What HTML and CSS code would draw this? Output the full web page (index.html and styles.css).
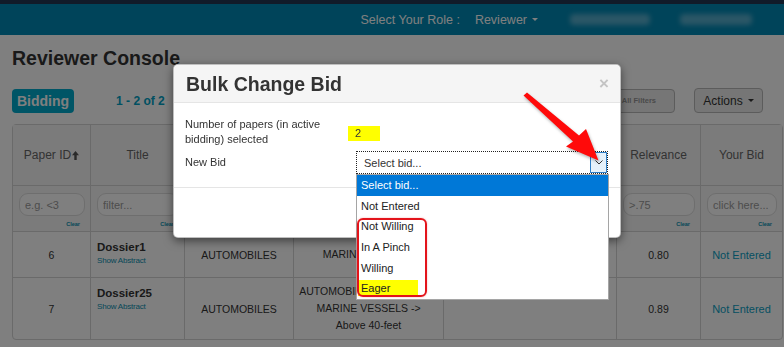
FILE: index.html
```html
<!DOCTYPE html>
<html lang="en">
<head>
<meta charset="utf-8">
<title>Reviewer Console</title>
<link rel="stylesheet" href="styles.css">
</head>
<body>
<header class="topbar">
  <span class="role-label">Select Your Role :</span>
  <span class="role-menu">Reviewer<span class="caret light"></span></span>
  <span class="blur-blob wide"></span>
  <span class="blur-blob"></span>
</header>

<main class="page">
  <h1 class="page-title">Reviewer Console</h1>
  <div class="toolbar">
    <span class="badge">Bidding</span>
    <span class="count">1 - 2 of 2</span>
    <span class="spacer"></span>
    <button class="btn btn-clear">Clear All Filters</button>
    <button class="btn btn-actions">Actions<span class="caret"></span></button>
  </div>

  <table class="papers">
    <thead>
      <tr class="head-row">
        <th class="c-id">Paper ID<svg class="sort" width="7" height="9" viewBox="0 0 7 9"><path d="M3.5 0 L7 4.2 H4.7 V9 H2.3 V4.2 H0 Z"/></svg></th>
        <th class="c-title">Title</th>
        <th class="c-cat">Category</th>
        <th class="c-topic">Topics</th>
        <th class="c-kw">Keywords</th>
        <th class="c-rel">Relevance</th>
        <th class="c-bid">Your Bid</th>
      </tr>
      <tr class="filter-row">
        <td><input type="text" placeholder="e.g. &lt;3"><a class="clear">Clear</a></td>
        <td><input type="text" placeholder="filter..."><a class="clear">Clear</a></td>
        <td><input type="text" placeholder="filter..."><a class="clear">Clear</a></td>
        <td><input type="text" placeholder="filter..."><a class="clear">Clear</a></td>
        <td><input type="text" placeholder="filter..."><a class="clear">Clear</a></td>
        <td><input type="text" placeholder="&gt;.75"><a class="clear">Clear</a></td>
        <td><input type="text" placeholder="click here..."><a class="clear">Clear</a></td>
      </tr>
    </thead>
    <tbody>
      <tr class="row-a">
        <td>6</td>
        <td class="title-cell"><div class="paper-name">Dossier1</div><a class="abstract">Show Abstract</a></td>
        <td>AUTOMOBILES</td>
        <td class="topic">MARINE VESSELS</td>
        <td></td>
        <td>0.80</td>
        <td class="bid">Not Entered</td>
      </tr>
      <tr class="row-b">
        <td>7</td>
        <td class="title-cell"><div class="paper-name">Dossier25</div><a class="abstract">Show Abstract</a></td>
        <td>AUTOMOBILES</td>
        <td class="topic">AUTOMOBILES -&gt; BOATS -&gt;<br>MARINE VESSELS -&gt;<br>Above 40-feet</td>
        <td></td>
        <td>0.89</td>
        <td class="bid">Not Entered</td>
      </tr>
    </tbody>
  </table>
</main>

<div class="backdrop"></div>

<div class="modal" role="dialog">
  <div class="modal-header">
    <h2 class="modal-title">Bulk Change Bid</h2>
    <button class="close">&times;</button>
  </div>
  <div class="modal-body">
    <div class="form-row first">
      <label class="form-label">Number of papers (in active bidding) selected</label>
      <span class="selected-count">2</span>
    </div>
    <div class="form-row second">
      <label class="form-label">New Bid</label>
      <div class="select-wrap">
        <div class="select-box">
          <span class="select-text">Select bid...</span>
          <span class="select-btn"><svg width="8" height="5" viewBox="0 0 8 5"><polyline points="0.5,0.5 4,4 7.5,0.5"/></svg></span>
        </div>
        <ul class="dropdown">
          <li class="active">Select bid...</li>
          <li>Not Entered</li>
          <li>Not Willing</li>
          <li>In A Pinch</li>
          <li>Willing</li>
          <li><span class="hl">Eager</span></li>
          <li class="ring"></li>
        </ul>
      </div>
    </div>
  </div>
  <div class="modal-footer"></div>
</div>

<svg class="callout" width="784" height="347" viewBox="0 0 784 347">
  <polygon points="527,92.5 579,135.5 586,129 598.5,160.5 566,146.5 573,141.5 523.5,95.5"/>
</svg>
</body>
</html>
```

FILE: styles.css
```css
* { box-sizing: border-box; }

html, body { margin: 0; padding: 0; }

body {
  width: 784px;
  height: 347px;
  overflow: hidden;
  position: relative;
  background: #fff;
  color: #333;
  font-family: "Liberation Sans", Arial, sans-serif;
}

/* ---------- top bar ---------- */
.topbar {
  height: 35px;
  border-top: 4px solid #223652;
  background: #0088b4;
  display: flex;
  align-items: center;
  justify-content: flex-end;
  padding-right: 32px;
  font-size: 12.5px;
  color: #fff;
}
.role-label { margin-right: 15px; }
.role-menu { display: flex; align-items: center; margin-right: 32px; }
.caret {
  display: inline-block;
  width: 0;
  height: 0;
  margin-left: 5px;
  border-top: 3px solid #333;
  border-left: 3px solid transparent;
  border-right: 3px solid transparent;
}
.caret.light { border-top-color: #fff; }
.blur-blob {
  display: inline-block;
  width: 72px;
  height: 11px;
  border-radius: 4px;
  background: rgba(190, 220, 235, 0.45);
  filter: blur(2.5px);
}
.blur-blob.wide { width: 80px; margin-right: 30px; }

/* ---------- page ---------- */
.page { padding-left: 12px; }

.page-title {
  margin: 13px 0 0;
  font-size: 19.5px;
  line-height: 21.5px;
  font-weight: bold;
  color: #333;
}

.toolbar {
  display: flex;
  align-items: center;
  height: 25px;
  margin-top: 18.5px;
  padding-right: 21px;
}
.badge {
  display: flex;
  align-items: center;
  height: 24px;
  padding: 0 5px;
  border-radius: 4px;
  background: #00aacc;
  color: #fff;
  font-weight: bold;
  font-size: 14px;
}
.count {
  margin-left: 42px;
  color: #00a0c4;
  font-weight: bold;
  font-size: 12px;
}
.spacer { flex: 1; }

.btn {
  font-family: "Liberation Sans", Arial, sans-serif;
  border: 1px solid #b8b8b8;
  border-radius: 4px;
  background: #ececec;
  color: #333;
  padding: 0 10px;
}
.btn-clear {
  width: 80px;
  height: 24px;
  font-size: 7.5px;
  font-weight: bold;
  color: #959595;
  text-align: right;
  padding: 0 18px 0 0;
}
.btn-actions {
  margin-left: 19px;
  width: 69px;
  height: 25px;
  font-size: 12px;
  display: flex;
  align-items: center;
  justify-content: center;
}

/* ---------- table ---------- */
.papers {
  margin-top: 11px;
  width: 771px;
  table-layout: fixed;
  border-collapse: separate;
  border-spacing: 0;
  border: 1px solid #d4d4d4;
  border-radius: 4px;
}
.papers th, .papers td {
  border-right: 1px solid #d4d4d4;
  border-bottom: 1px solid #d4d4d4;
  padding: 0 5px;
  text-align: center;
  vertical-align: middle;
}
.papers th:last-child, .papers td:last-child { border-right: none; }
.papers tbody tr:last-child td { border-bottom: none; }

.c-id { width: 78px; }
.c-title { width: 94px; }
.c-cat { width: 109px; }
.c-topic { width: 150px; }
.c-kw { width: 173px; }
.c-rel { width: 84px; }
.c-bid { width: 81px; }

.head-row { height: 61px; }
.head-row th {
  background: #f7f7f7;
  font-weight: normal;
  font-size: 12px;
  color: #666;
}
.sort { margin-left: 1px; fill: #555; vertical-align: -1px; }

.filter-row { height: 46px; }
.filter-row td {
  background: #f7f7f7;
  vertical-align: top;
  padding: 7px 5px 0 6px;
}
.filter-row input {
  display: block;
  width: 100%;
  height: 23px;
  margin: 0;
  border: 1px solid #dcdcdc;
  border-radius: 9px;
  padding: 0 5px;
  background: #fff;
  font-family: "Liberation Sans", Arial, sans-serif;
  font-size: 11px;
  color: #333;
}
.filter-row input::placeholder { color: #9a9a9a; }
.clear {
  display: block;
  text-align: right;
  padding-right: 5px;
  margin-top: 4px;
  font-size: 5.5px;
  line-height: 8px;
  font-weight: bold;
  color: #0a8fb0;
}

.row-a { height: 46px; }
.row-b { height: 61px; }
.papers tbody td {
  font-size: 10.5px;
  color: #333;
}
.papers tbody td.title-cell {
  text-align: left;
  vertical-align: top;
  padding: 8px 5px 0 6px;
}
.paper-name {
  font-weight: bold;
  font-size: 11.5px;
  line-height: 15px;
  color: #333;
}
.abstract {
  display: block;
  font-size: 8px;
  line-height: 12px;
  letter-spacing: -0.2px;
  color: #0a8fb0;
}
.papers tbody td.topic { line-height: 17px; }
.papers tbody td.bid { color: #0aa0c4; font-size: 11px; }

/* ---------- modal ---------- */
.backdrop {
  position: fixed;
  inset: 0;
  background: rgba(0, 0, 0, 0.5);
  z-index: 10;
}

.modal {
  position: absolute;
  left: 173px;
  top: 64px;
  width: 448px;
  z-index: 20;
  background: #fff;
  border: 1px solid rgba(0, 0, 0, 0.25);
  border-radius: 5px;
  box-shadow: 0 3px 10px rgba(0, 0, 0, 0.5);
}
.modal-header {
  height: 38px;
  display: flex;
  align-items: center;
  justify-content: space-between;
  padding: 0 11px 0 12px;
  background: #f5f5f5;
  border-bottom: 1px solid #e5e5e5;
  border-radius: 5px 5px 0 0;
}
.modal-title {
  margin: 0;
  font-size: 19.5px;
  font-weight: bold;
  color: #333;
  line-height: 22px;
  padding-top: 1px;
}
.close {
  border: none;
  background: none;
  padding: 0;
  font-family: "Liberation Sans", Arial, sans-serif;
  font-size: 17px;
  font-weight: bold;
  color: #c4c4c4;
  line-height: 1;
}

.modal-body {
  height: 84px;
  padding: 13.5px 12px 0 11px;
  font-size: 11px;
  color: #333;
}
.form-row { display: flex; }
.form-row.first { align-items: flex-start; }
.form-row.second { align-items: center; margin-top: 4.5px; }
.form-label {
  width: 163px;
  flex: none;
  line-height: 15px;
}
.selected-count {
  margin-top: 9px;
  width: 32px;
  height: 15px;
  line-height: 15px;
  padding-left: 7px;
  background: #ffff00;
}

.select-wrap {
  position: relative;
  margin-left: 8px;
  width: 252px;
}
.select-box {
  height: 23px;
  display: flex;
  align-items: center;
  border: 1px dotted #222;
  background: #fff;
}
.select-text { flex: 1; padding-left: 7px; color: #333; }
.select-btn {
  width: 17px;
  height: 21px;
  display: flex;
  align-items: center;
  justify-content: center;
  background: #e5f1fb;
  border: 1px solid #2f7fc8;
}
.select-btn svg { fill: none; stroke: #333; stroke-width: 1; }

.dropdown {
  position: absolute;
  left: 0;
  top: 23px;
  width: 253px;
  margin: 0;
  padding: 0;
  list-style: none;
  background: #fff;
  border: 1px solid #a5a5a5;
  z-index: 5;
}
.dropdown li {
  height: 20.67px;
  line-height: 20.67px;
  padding-left: 4px;
  font-size: 11px;
  color: #222;
}
.dropdown li.active { background: #0078d7; color: #fff; }
.dropdown .hl {
  display: inline-block;
  width: 60px;
  line-height: 16px;
  margin-left: -3px;
  padding-left: 3px;
  background: #ffff00;
}
.dropdown li.ring {
  position: absolute;
  left: 0;
  top: 43px;
  width: 70px;
  height: 79px;
  padding: 0;
  border: 2px solid #e3141b;
  border-radius: 6px;
  box-shadow: 0 0 2px rgba(227, 20, 27, 0.35);
}

.modal-footer {
  height: 50px;
  border-top: 1px solid #e5e5e5;
}

/* ---------- callout arrow ---------- */
.callout {
  position: absolute;
  left: 0;
  top: 0;
  z-index: 30;
  pointer-events: none;
  fill: #ff0a0a;
  filter: drop-shadow(1px 2px 1.5px rgba(0, 0, 0, 0.3));
}
```
